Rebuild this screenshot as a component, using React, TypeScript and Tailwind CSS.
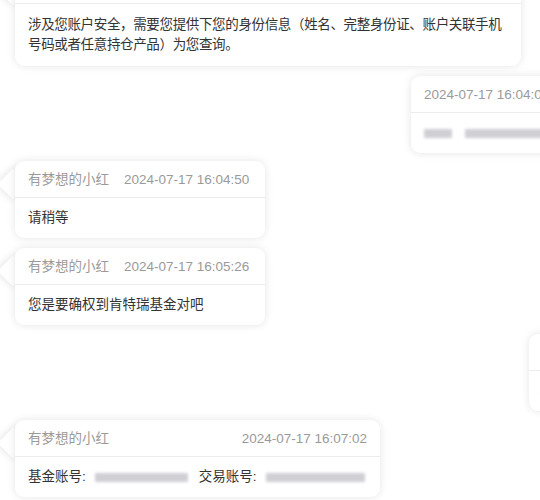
import React from 'react';

const FONT = '"Liberation Sans", "Noto Sans CJK SC", Arial, sans-serif';

interface BubbleProps {
  name?: string;
  time: string;
  spread?: boolean;
  tail?: boolean;
  className?: string;
  children?: React.ReactNode;
}

const Blur: React.FC<{ w: number; className?: string }> = ({ w, className }) => (
  <span
    className={`inline-block h-[9px] rounded-[1px] bg-[#cfcfd4] blur-[1.5px] align-middle ${className ?? ''}`}
    style={{ width: w }}
  />
);

const Bubble: React.FC<BubbleProps> = ({ name, time, spread, tail, className, children }) => (
  <div className={`relative ${className ?? ''}`}>
    {tail && (
      <div className="absolute left-[-13px] top-[12px] h-[22px] w-[22px] rotate-45 bg-white shadow-[0_0_8px_rgba(0,0,0,0.13)]" />
    )}
    <div className="relative rounded-[9px] bg-white shadow-[0_0_8px_rgba(0,0,0,0.11)]">
      {tail && <div className="absolute left-0 top-[8px] h-[30px] w-[14px] bg-white" />}
      <div
        className={`relative flex h-[37px] items-center px-[13px] pt-[3px] text-[13.5px] text-[#9a9a9a] border-b border-[#ececec] ${
          spread ? 'justify-between' : 'gap-[15px]'
        }`}
      >
        {name && <span>{name}</span>}
        <span className="whitespace-nowrap">{time}</span>
      </div>
      <div className="relative px-[13px] py-[10px] text-[13.5px] leading-[20px] text-[#333]">{children}</div>
    </div>
  </div>
);

const App: React.FC = () => {
  return (
    <div className="h-[500px] w-[540px] overflow-hidden bg-white" style={{ fontFamily: FONT }}>
      <div className="flex flex-col">
        <Bubble time="" tail className="-mt-[33px] ml-[15px] w-[506px]">
          <div className="py-[1px] tracking-[-0.35px]">
            涉及您账户安全，需要您提供下您的身份信息（姓名、完整身份证、账户关联手机号码或者任意持仓产品）为您查询。
          </div>
        </Bubble>

        <Bubble time="2024-07-17 16:04:01" className="ml-[411px] mt-[10px] w-[170px]">
          <div className="flex h-[20px] items-center gap-[13px]">
            <Blur w={28} />
            <Blur w={90} />
          </div>
        </Bubble>

        <Bubble name="有梦想的小红" time="2024-07-17 16:04:50" tail className="ml-[15px] mt-[8px] w-[250px]">
          请稍等
        </Bubble>

        <Bubble name="有梦想的小红" time="2024-07-17 16:05:26" tail className="ml-[15px] mt-[10px] w-[250px]">
          您是要确权到肯特瑞基金对吧
        </Bubble>

        <Bubble time="2024-07-17 16:06:10" className="ml-[529px] mt-[9px] w-[170px]">
          <div className="flex h-[20px] items-center">
            <Blur w={60} />
          </div>
        </Bubble>

        <Bubble name="有梦想的小红" time="2024-07-17 16:07:02" spread tail className="ml-[15px] mt-[9px] w-[365px]">
          <div className="flex h-[20px] items-center">
            <span>基金账号:</span>
            <Blur w={93} className="ml-[9px]" />
            <span className="ml-[11px]">交易账号:</span>
            <Blur w={99} className="ml-[9px]" />
          </div>
        </Bubble>
      </div>
    </div>
  );
};

export default App;
